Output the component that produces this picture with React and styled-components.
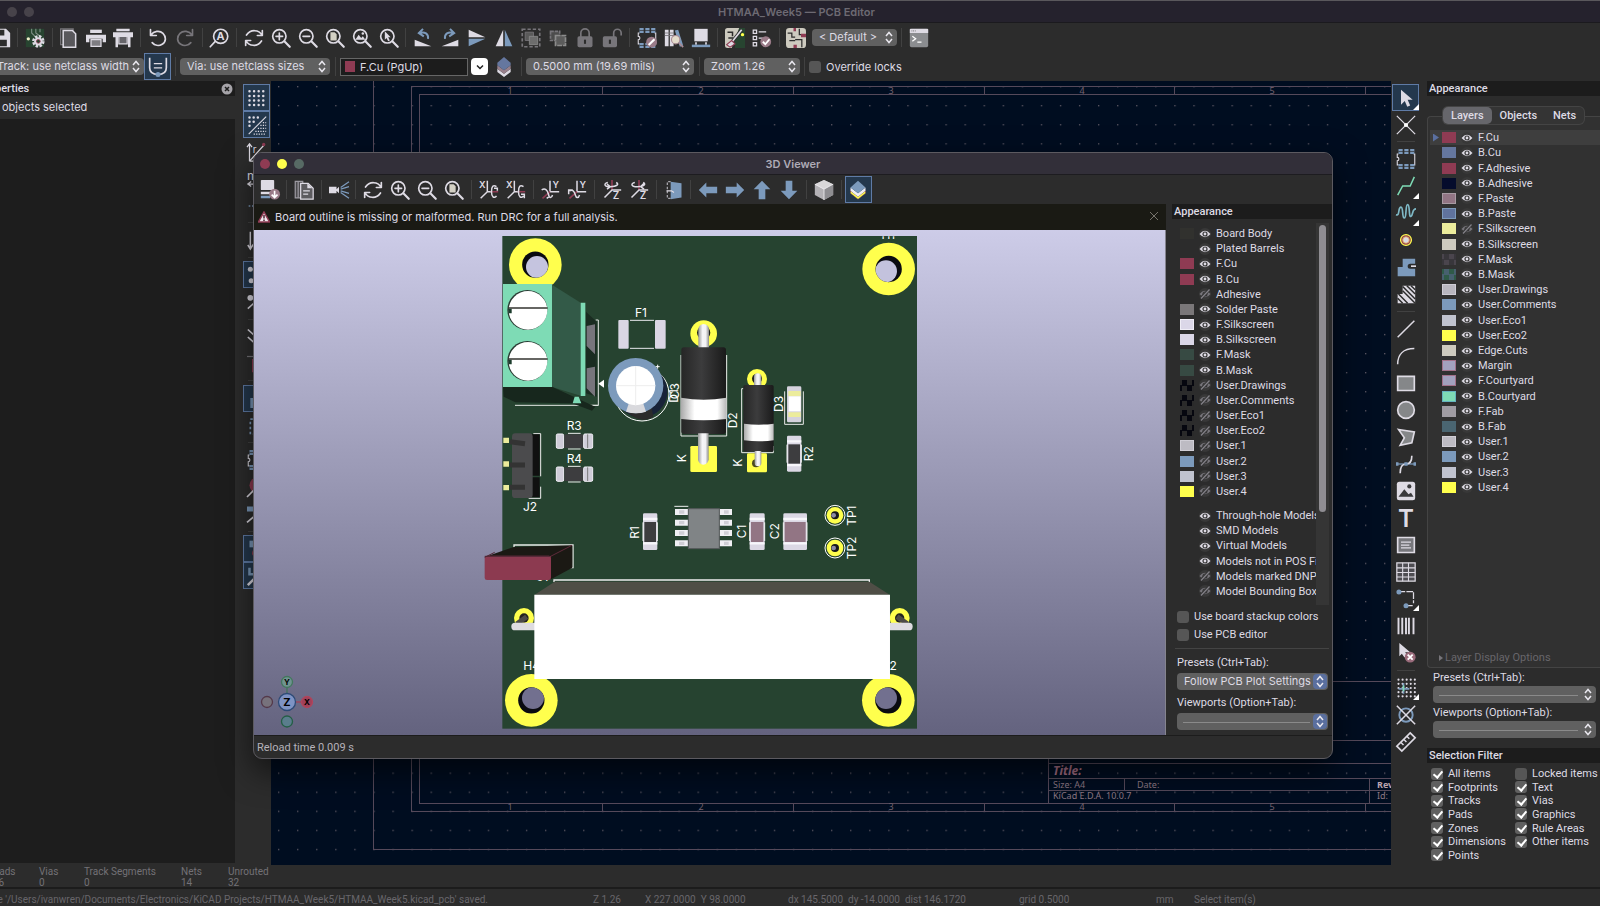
import React, { useState } from 'react'
import styled, { createGlobalStyle, css } from 'styled-components'

const LIGHT = '#dedbe4'
const BLUE = '#7c9abc'
const RED = '#8f3b53'
const GREY = '#77757a'
const MINT = '#7edbb5'

const line = { fill: 'none', stroke: LIGHT, strokeWidth: 2, strokeLinecap: 'round', strokeLinejoin: 'round' }

const lens = (
  <g {...line}>
    <circle cx="10" cy="10" r="8" />
    <path d="M16 16l6.5 6.5" strokeWidth="2.6" />
  </g>
)

const footprint = (
  <>
    <path d="M3 6H1.500v4a2 2 0 0 1 0 4v5H3M21 6h1.500v13H21" fill="none" stroke={LIGHT} strokeWidth="1.300" />
    <path d="M3 0h5v6H3zM10 0h5v6h-5zM17 0h5v6h-5zM3 18h5v6H3zM10 18h5v6h-5zM17 18h5v6h-5z" fill={BLUE} />
    <path d="M3 3h19M3 21h19" stroke="#2c2c2c" strokeWidth=".8" />
  </>
)

// 24 x 24 drawings, one for each tool
const ICONS = {
  save: <path d="M1 1h17l5 5v17H1zM6 2v7h10V2zM5 14v8h14v-8z" fill={LIGHT} fillRule="evenodd" />,
  boardSetup: (
    <>
      <path d="M1 1h22v22H1z" fill="#274430" />
      <path d="M8 1v5l4 4M13 1v5l4 3M18 1v4" fill="none" stroke="#7f8f86" strokeWidth="1.300" />
      <circle cx="4" cy="13" r="2" fill="#eeeec8" />
      <circle cx="16" cy="16" r="6" fill="none" stroke={LIGHT} strokeWidth="3" strokeDasharray="3 1.700" />
      <circle cx="16" cy="16" r="5" fill={LIGHT} />
      <circle cx="16" cy="16" r="2.200" fill="#274430" stroke={RED} />
    </>
  ),
  page: (
    <>
      <path d="M2 1h15v19H2z" fill="none" stroke={GREY} strokeWidth="1.500" />
      <path d="M5 3h11l4 4v16H5z" fill="#59585c" stroke={LIGHT} strokeWidth="1.800" />
    </>
  ),
  print: (
    <>
      <path d="M5 2h14v4H5z" fill={LIGHT} />
      <path d="M0 8h24v9h-4v-4H4v4H0z" fill={LIGHT} />
      <path d="M6 14h12v8H6z" fill="#7e7d82" stroke={LIGHT} strokeWidth="1.500" />
    </>
  ),
  plot: (
    <>
      <path d="M4 1h16v3H4zM0 5h24v6h-3v12h-3V11H6v12H3V11H0z" fill={LIGHT} />
      <path d="M7 10h10v9H7z" fill="#66656a" stroke={LIGHT} strokeWidth="1.500" />
    </>
  ),
  undo: <path d="M3 2v7h7M3.500 8.500C7 3.500 14 2.500 18 6.500s4 10-1 13c-4 2.500-9 1.500-12-2" {...line} />,
  redo: <path d="M21 2v7h-7M20.500 8.500C17 3.500 10 2.500 6 6.500s-4 10 1 13c4 2.500 9 1.500 12-2" {...line} stroke={GREY} />,
  find: (
    <>
      <g {...line}>
        <circle cx="14" cy="10" r="8.500" />
        <path d="M7.500 16L1.500 22.500" />
      </g>
      <text x="14" y="14.500" textAnchor="middle" fontSize="13" fontWeight="700" fill={LIGHT}>A</text>
    </>
  ),
  refresh: (
    <path d="M22 3v6h-6M21.500 8.500C18 2 8 1 3 8.500M2 21v-6h6M2.500 15.500C6 22 16 23 21 15.500" {...line} />
  ),
  zoomIn: <>{lens}<path d="M6 10h8M10 6v8" {...line} /></>,
  zoomOut: <>{lens}<path d="M6 10h8" {...line} /></>,
  zoomFit: <>{lens}<path d="M6.500 5h5l2.500 2.500V15H6.500z" fill="#d3d0c4" /></>,
  zoomObjects: <>{lens}<path d="M4 14l4-6 3 4 2-2 3 4z" fill={LIGHT} /><circle cx="13" cy="6.500" r="1.500" fill={LIGHT} /></>,
  zoomSelection: <>{lens}<path d="M7 4l7 7h-3l2 4-2 1-2-4-2 2z" fill={LIGHT} /></>,
  rotateCcw: (
    <>
      <path d="M2 14l20 8H2z" fill={LIGHT} />
      <path d="M18 13c1-6-4-9-10-7M12 1L7 6l6 4" fill="none" stroke={BLUE} strokeWidth="2.400" />
    </>
  ),
  rotateCw: (
    <>
      <path d="M22 14L2 22h20z" fill={LIGHT} />
      <path d="M6 13c-1-6 4-9 10-7M12 1l5 5-6 4" fill="none" stroke={BLUE} strokeWidth="2.400" />
    </>
  ),
  flip: <><path d="M2 2l20 9H2z" fill={LIGHT} /><path d="M2 22l20-9H2z" fill={BLUE} /></>,
  mirror: <><path d="M11 2v20H2z" fill={LIGHT} /><path d="M13 2v20h9z" fill={BLUE} /></>,
  group: (
    <>
      <path d="M1.500 1.500h21v21h-21z" fill="none" stroke={GREY} strokeWidth="2" strokeDasharray="4 2.300" />
      <path d="M5 5h10v10H5z" fill="#5a5a5a" stroke={GREY} />
      <path d="M10 10h10v10H10z" fill="#6d6d6d" stroke="#8c8c8c" />
    </>
  ),
  ungroup: (
    <>
      <path d="M3 4h11v11H3z" fill="#4c4c4c" stroke={GREY} strokeWidth="2" strokeDasharray="4 1" />
      <path d="M9 9h12v12H9z" fill="#5c5c5c" stroke="#8c8c8c" strokeWidth="2" strokeDasharray="6 1" />
    </>
  ),
  lock: (
    <>
      <path d="M7 11V6a5 5 0 0 1 10 0v5" fill="none" stroke={GREY} strokeWidth="2" />
      <rect x="3" y="10" width="18" height="13" rx="2" fill={GREY} />
      <path d="M12 14v5" stroke="#2c2c2c" strokeWidth="2.500" />
    </>
  ),
  unlock: (
    <>
      <path d="M14 11V6a4.500 4.500 0 0 1 9 0v3" fill="none" stroke={GREY} strokeWidth="2" />
      <rect x="1" y="10" width="17" height="13" rx="2" fill={GREY} />
      <path d="M9.500 14v5" stroke="#2c2c2c" strokeWidth="2.500" />
    </>
  ),
  footprintEditor: (
    <>
      {footprint}
      <circle cx="17.500" cy="17" r="6.500" fill="#9a7b88" />
      <path d="M14 20.500l7-7" stroke="#fff" strokeWidth="2.600" />
    </>
  ),
  library: (
    <>
      <path d="M1 2h4.500v20H1zM7 2h4.500v20H7z" fill={LIGHT} />
      <path d="M1 6h11M1 9h11" stroke="#77757a" />
      <path d="M13 3l4-1 6 19-4 1.500z" fill={BLUE} />
      <circle cx="14" cy="14" r="5" fill="#e4dccb" stroke="#a98a93" strokeWidth="1.300" />
      <path d="M18 18l5 5" stroke="#a98a93" strokeWidth="2" />
    </>
  ),
  viewer3d: (
    <>
      <path d="M4 1h16v15H4z" fill={LIGHT} />
      <path d="M5 17h2v3H5zM17 17h2v3h-2z" fill={LIGHT} />
      <path d="M1 20h22v3H1z" fill={BLUE} />
    </>
  ),
  updatePcb: (
    <>
      <path d="M12 0h12v24H12z" fill="#274430" />
      <path d="M3 0h14L8 24H3a3 3 0 0 1-3-3V3a3 3 0 0 1 3-3z" fill="#cdcabf" />
      <path d="M3 5h6v5M4 12h6" fill="none" stroke="#2c2c2c" strokeWidth="1.800" />
      <circle cx="21" cy="8" r="2" fill="#ffff4d" />
      <path d="M20 2L9 16" stroke="#2c2c2c" strokeWidth="4" />
      <path d="M20 2L9 16" stroke={LIGHT} strokeWidth="2" />
      <path d="M2 20l6-5 4 4-6 4z" fill={LIGHT} stroke={RED} strokeWidth="1.300" />
    </>
  ),
  drc: (
    <>
      <path d="M1.500 2.500h4v4h-4zM1.500 10h4v4h-4zM1.500 17.500h4v4h-4z" fill="none" stroke={LIGHT} strokeWidth="1.500" />
      <path d="M8 4.500h9M8 12h5" stroke={LIGHT} strokeWidth="1.500" />
      <circle cx="16.500" cy="16.500" r="6.500" fill="#9a7b88" />
      <path d="M13 16.500l3 3 5-6" fill="none" stroke="#fff" strokeWidth="2.200" />
    </>
  ),
  board: (
    <>
      <rect x="0" y="0" width="24" height="24" rx="4" fill="#cdcabf" />
      <path d="M2 6h5v5h4M16 1v7h7M11 14h8v9M11 15H4" fill="none" stroke="#2c2c2c" strokeWidth="1.500" />
      <path d="M18 7h6v4h-6zM9 0h3v4H9zM9 20h4v4H9z" fill={RED} />
    </>
  ),
  console: (
    <>
      <rect x="1" y="1" width="22" height="22" rx="2" fill="#8b8d90" />
      <path d="M1 1h22v5H1z" fill={LIGHT} />
      <path d="M3 3.500h5" stroke="#555" strokeDasharray="1 1" />
      <path d="M4 10l4 3-4 3M10 17h5" fill="none" stroke="#fff" strokeWidth="1.500" />
    </>
  ),
  trackWidth: (
    <>
      <path d="M2 1v12c0 6 4 8 10 8s10-2 10-8V1" fill="none" stroke={LIGHT} strokeWidth="2" />
      <path d="M7 8h10M7 13h10" stroke={LIGHT} strokeWidth="1.500" />
      <circle cx="12" cy="21" r="3" fill={BLUE} />
    </>
  ),
  layers: (
    <>
      <path d="M4 14v4l8 6 8-6v-4l-8 6z" fill={LIGHT} />
      <path d="M4 10v4l8 6 8-6v-4l-8 6z" fill="#98808c" />
      <path d="M12 0l8 7v3l-8 6-8-6V7z" fill="#65779f" />
    </>
  ),
  stack: (
    <>
      <path d="M3 13v3l9 7 9-7v-3l-9 7z" fill="#ffff4d" stroke={RED} strokeWidth=".8" strokeDasharray="2 1" />
      <path d="M3 9v4l9 7 9-7V9l-9 7z" fill="#f1eef6" />
      <path d="M12 1l9 8-9 7-9-7z" fill={BLUE} />
    </>
  ),
  exportImage: (
    <>
      <rect x="1" y="0" width="16" height="12" rx="1" fill={LIGHT} />
      <path d="M1 14h12v3H1z" fill={LIGHT} />
      <path d="M1 19h11v3H1z" fill={BLUE} />
      <circle cx="17.500" cy="17" r="6.500" fill="#9a7b88" />
      <path d="M17.500 13v8M14 17.500l3.500 3.500 3.500-3.500" fill="none" stroke="#fff" strokeWidth="2" />
    </>
  ),
  copy: (
    <>
      <path d="M1.500 1.500h9v20h-9zM5 1v20" fill="#4b4a4d" stroke="#9b99a0" strokeWidth="1.500" />
      <path d="M8 4h9l6 6v13H8z" fill="#5d5c60" stroke={LIGHT} strokeWidth="1.500" />
      <path d="M16 4v6h6z" fill={LIGHT} />
      <path d="M11 13h8M11 17h6" stroke={LIGHT} strokeWidth="1.500" />
    </>
  ),
  raytrace: (
    <>
      <path d="M0 8h9v8H0zM9 11l3-3v8l-3-3z" fill={LIGHT} />
      <path d="M14 9l10-7M14 11l10-3M14 13l10 3M14 15l10 7" stroke={BLUE} strokeWidth="1.500" />
    </>
  ),
  rotX: (
    <>
      <text x="0" y="9" fontSize="11" fontWeight="600" fill={LIGHT}>X</text>
      <path d="M10 1v13L2 22M10 14h5" fill="none" stroke={LIGHT} strokeWidth="1.800" />
      <path d="M14 14h9" stroke={RED} strokeWidth="1.800" />
      <path d="M21 8c-4-3-6 0-6 6s3 9 6 5M18 10h4v3" fill="none" stroke={LIGHT} strokeWidth="1.800" />
    </>
  ),
  rotXBack: (
    <>
      <text x="0" y="9" fontSize="11" fontWeight="600" fill={LIGHT}>X</text>
      <path d="M10 1v13L2 22M10 14h5" fill="none" stroke={LIGHT} strokeWidth="1.800" />
      <path d="M14 14h9" stroke={RED} strokeWidth="1.800" />
      <path d="M21 8c-4-3-6 0-6 6s3 9 6 5M18 17h4v5" fill="none" stroke={LIGHT} strokeWidth="1.800" />
    </>
  ),
  rotY: (
    <>
      <text x="15" y="9" fontSize="11" fontWeight="600" fill={LIGHT}>Y</text>
      <path d="M12 1v13h11" fill="none" stroke={LIGHT} strokeWidth="1.800" />
      <path d="M12 14L3 22" stroke={RED} strokeWidth="1.800" />
      <path d="M2 12c4-3 7 0 8 5s4 5 5 1M8 22l3-2-1-4" fill="none" stroke={LIGHT} strokeWidth="1.800" />
    </>
  ),
  rotYBack: (
    <>
      <text x="15" y="9" fontSize="11" fontWeight="600" fill={LIGHT}>Y</text>
      <path d="M12 1v13h11" fill="none" stroke={LIGHT} strokeWidth="1.800" />
      <path d="M12 14L3 22" stroke={RED} strokeWidth="1.800" />
      <path d="M2 17v-5h5M3 13c4-2 6 1 7 5s4 4 5 0" fill="none" stroke={LIGHT} strokeWidth="1.800" />
    </>
  ),
  rotZ: (
    <>
      <text x="13" y="23" fontSize="12" fontWeight="600" fill={LIGHT}>Z</text>
      <path d="M12 0v12" stroke={RED} strokeWidth="2" />
      <path d="M23 12H12l-9 9" fill="none" stroke={LIGHT} strokeWidth="1.800" />
      <path d="M7 3c-5 1-5 5 3 5s11-3 7-5M6 5l4 3-4 3" fill="none" stroke={LIGHT} strokeWidth="1.800" />
    </>
  ),
  rotZBack: (
    <>
      <text x="13" y="23" fontSize="12" fontWeight="600" fill={LIGHT}>Z</text>
      <path d="M12 0v12" stroke={RED} strokeWidth="2" />
      <path d="M23 12H12l-9 9" fill="none" stroke={LIGHT} strokeWidth="1.800" />
      <path d="M7 3c-5 1-5 5 3 5s11-3 7-5M18 4l-4 4 4 3" fill="none" stroke={LIGHT} strokeWidth="1.800" />
    </>
  ),
  flipBoard: (
    <>
      <path d="M8 2H4v20h4" fill="none" stroke="#a9a7ad" strokeWidth="1.500" strokeDasharray="3 2" />
      <path d="M8 2l13 2v17l-13 2z" fill={BLUE} />
      <path d="M3 13h6l3 2" fill="none" stroke={LIGHT} strokeWidth="1.500" />
    </>
  ),
  left: <path d="M1 12L10 3v5h13v8H10v5z" fill={BLUE} />,
  right: <path d="M23 12L14 3v5H1v8h13v5z" fill={BLUE} />,
  up: <path d="M12 1l10 10h-6v12H8V11H2z" fill={BLUE} />,
  down: <path d="M12 23l10-10h-6V1H8v12H2z" fill={BLUE} />,
  cube: (
    <>
      <path d="M12 0l11 5v13l-11 6-11-6V5z" fill="#b4b2b6" />
      <path d="M12 0l11 5-11 6L1 5z" fill="#d9d7d9" />
      <path d="M12 11l11-6v13l-11 6z" fill="#8f8e92" />
      <path d="M1 5l11 6 11-6M12 11v13" fill="none" stroke="#f0eef2" />
    </>
  ),
  gridDots: (
    <path d="M3 4h19M3 9.500h19M3 15h19M3 20.500h19" stroke={LIGHT} strokeWidth="3" strokeLinecap="round" strokeDasharray="0 5.500" fill="none" />
  ),
  gridOverride: (
    <>
      <path d="M3 3h11M3 8h7M3 13h3" stroke={LIGHT} strokeWidth="3" strokeLinecap="round" strokeDasharray="0 5" />
      <path d="M2 23L23 2" stroke={LIGHT} strokeWidth="1.300" />
      <path d="M19 9h4M16 12.500h7M13 16h10M10 19.500h13M8 23h15" stroke={LIGHT} strokeWidth="1.500" strokeDasharray="1.500 1.500" />
    </>
  ),
  polar: (
    <>
      <path d="M3 23V3M0 6l3-4 3 4M3 23h9M3 23L21 3" fill="none" stroke={LIGHT} strokeWidth="1.500" />
      <circle cx="20" cy="3" r="2" fill={RED} />
      <text x="7" y="13" fontSize="12" fill={LIGHT}>r</text>
    </>
  ),
  units: (
    <>
      <text x="0" y="13" fontSize="15" fill={LIGHT}>mm</text>
      <path d="M2 18h20M5 15l-4 3 4 3" fill="none" stroke={LIGHT} strokeWidth="1.500" />
    </>
  ),
  cursor45: <path d="M4 2v20M1 18l3 5 3-5M7 18l14-14" fill="none" stroke={LIGHT} strokeWidth="1.800" />,
  cursorFull: <path d="M12 2v20M2 12h20" fill="none" stroke={BLUE} strokeWidth="1.800" strokeDasharray="2 2" />,
  ratsnest: (
    <g fill={LIGHT}>
      <circle cx="4" cy="5" r="3" /><circle cx="5" cy="19" r="3" /><circle cx="19" cy="5" r="3" />
    </g>
  ),
  curved: <><circle cx="4" cy="7" r="3.500" fill={LIGHT} /><path d="M1 20L20 3" stroke={LIGHT} strokeWidth="1.800" /></>,
  contrast: (
    <>
      <path d="M1 3l20 18M1 12l12 11" stroke={LIGHT} strokeWidth="2" />
      <path d="M9 1l12 12" stroke={RED} strokeWidth="2" strokeDasharray="2 2" />
    </>
  ),
  netHighlight: <><path d="M0 3h22" stroke={GREY} strokeWidth="1.500" /><path d="M7 6v16" stroke={RED} strokeWidth="2" /></>,
  zoneFill: <path d="M4 12h18v12H4z" fill={BLUE} />,
  zoneOutline: <path d="M4 5h18v18H4z" fill="none" stroke={BLUE} strokeWidth="2" strokeDasharray="3 3" />,
  padFill: <><circle cx="13" cy="10" r="10" fill={RED} /><path d="M0 24L12 12" stroke={LIGHT} strokeWidth="2" /></>,
  trackFill: <><path d="M0 3h20v6H0z" fill={BLUE} /><path d="M0 22L12 12" stroke={LIGHT} strokeWidth="2" /></>,
  panels: <><path d="M3 2h14v8H3z" fill={BLUE} /><circle cx="11" cy="17" r="5" fill={RED} /></>,
  props: <><path d="M3 2v8h16" fill="none" stroke={BLUE} strokeWidth="3" /><path d="M1 23l10-10" stroke={LIGHT} strokeWidth="3" /></>,
  footprint,
  arrow: <path d="M6 2l14 12h-6l3 7-3.500 1.500-3-7L6 20z" fill={LIGHT} />,
  localRats: <><path d="M1 1l22 22M23 1L1 23" stroke={LIGHT} strokeWidth="1.500" /><circle cx="12" cy="12" r="2.500" fill="#fff" /></>,
  route: <path d="M2 23L8 12h9l5-11" fill="none" stroke={MINT} strokeWidth="1.800" />,
  tune: (
    <path d="M0 14c5 2 2-9 6-9 3 0 1 13 4 13s1-16 4-16 1 16 4 14 1-9 6-9" fill="none" stroke="#7fb9c6" strokeWidth="2" />
  ),
  via: (
    <>
      <circle cx="12" cy="12" r="6.500" fill={RED} stroke="#ffff4d" strokeWidth="1.500" />
      <circle cx="12" cy="12" r="4" fill="#dedbe4" stroke="#e0a04d" />
    </>
  ),
  zone: (
    <>
      <path d="M8 2h15v6h-6a3 3 0 0 0 0 6h6v9H2V12h6z" fill={BLUE} />
      <path d="M24 11h-6" stroke={LIGHT} strokeWidth="2" />
    </>
  ),
  ruleArea: (
    <>
      <path d="M8 2h15v21H2V12h6z" fill={LIGHT} />
      <path d="M8 3l15 15M8 8l15 15M3 12l11 11M13 2l10 10M18 2l5 5M2 17l6 6" stroke="#2c2c2c" strokeWidth="1.800" />
    </>
  ),
  line: <path d="M2 22L22 2" stroke={LIGHT} strokeWidth="1.800" />,
  arc: <path d="M2 22C2 10 9 3 22 3" fill="none" stroke={LIGHT} strokeWidth="1.800" />,
  rect: <path d="M2 4h20v17H2z" fill="#858789" stroke={LIGHT} strokeWidth="2" />,
  circle: <circle cx="12" cy="12" r="10" fill="#858789" stroke={LIGHT} strokeWidth="2" />,
  polygon: <path d="M3 3l19 3-3 13-14 3 5-9z" fill="#858789" stroke={LIGHT} strokeWidth="2" />,
  bezier: (
    <>
      <path d="M1 12h22" stroke={BLUE} strokeWidth="1.500" />
      <path d="M5 23c0-8 2-11 7-11s7-3 7-10" fill="none" stroke={LIGHT} strokeWidth="2" />
      <path d="M0 10h3v4H0zM21 10h3v4h-3zM10 10h4v4h-4z" fill={BLUE} />
    </>
  ),
  image: (
    <>
      <rect x="1" y="1" width="22" height="22" rx="3" fill={LIGHT} />
      <path d="M3 19l7-9 5 6 3-2 3 5z" fill="#3a3a3c" />
      <circle cx="16" cy="6.500" r="2.500" fill="#3a3a3c" />
    </>
  ),
  text: <text x="12" y="23" textAnchor="middle" fontSize="29" fontWeight="600" fill={LIGHT}>T</text>,
  textBox: (
    <>
      <path d="M2 3h20v18H2z" fill="#77777c" stroke={LIGHT} strokeWidth="2" />
      <path d="M6 8.500h12M6 12h10M6 15.500h12" stroke={LIGHT} strokeWidth="1.500" />
    </>
  ),
  table: (
    <>
      <path d="M1 1h22v22H1z" fill="#4e4d52" stroke={LIGHT} strokeWidth="1.500" />
      <path d="M1 7h22M1 12.500h22M1 18h22M8 1v22M15 1v22" stroke={LIGHT} strokeWidth="1.300" />
    </>
  ),
  dimension: (
    <>
      <path d="M3 3h18v14M12 20h9" fill="none" stroke={LIGHT} strokeWidth="1.500" strokeDasharray="8 1.500" />
      <circle cx="3.500" cy="3.500" r="3" fill={BLUE} />
      <circle cx="12" cy="20" r="3" fill={BLUE} />
    </>
  ),
  barcode: <path d="M3 2v20M7.500 2v20M12 2v20M15.500 2v20M21 2v20" stroke={LIGHT} strokeWidth="2.300" />,
  remove: (
    <>
      <path d="M4 0l13 11h-6l3 5-4 1-3-4-3 3z" fill={LIGHT} />
      <circle cx="17" cy="17" r="6.500" fill="#9a6b7b" />
      <path d="M14 14l6 6M20 14l-6 6" stroke="#fff" strokeWidth="2.200" />
    </>
  ),
  gridOrigin: (
    <>
      <path d="M3 2h20M3 7h20M3 17h20M3 22h20M3 12h20" stroke={LIGHT} strokeWidth="2.600" strokeLinecap="round" strokeDasharray="0 4.900" />
      <path d="M9 6v13M3 13h13" stroke={BLUE} strokeWidth="2" />
      <path d="M9 9v7" stroke={MINT} strokeWidth="2" />
    </>
  ),
  drillOrigin: (
    <>
      <circle cx="12" cy="12" r="8" fill="none" stroke={BLUE} strokeWidth="2.300" />
      <path d="M1 1l22 22M23 1L1 23" stroke={LIGHT} strokeWidth="1.800" />
    </>
  ),
  ruler: (
    <>
      <path d="M17 1l6 6L7 23l-6-6z" fill="none" stroke={LIGHT} strokeWidth="2" />
      <path d="M13 5l3 3M9.500 9l3 3M6 12.500l3 3" stroke={LIGHT} strokeWidth="1.800" />
    </>
  ),
}

const mainTools = [
  'save', '|', 'boardSetup', '|', 'page', 'print', 'plot', '|', 'undo', 'redo', '|', 'find', '|', 'refresh', 'zoomIn',
  'zoomOut', 'zoomFit', 'zoomObjects', 'zoomSelection', '|', 'rotateCcw', 'rotateCw', 'flip', 'mirror', 'group',
  'ungroup', 'lock', 'unlock', '|', 'footprintEditor', 'library', 'viewer3d', '|', 'updatePcb', 'drc', '|', 'board',
]
const leftTools = [
  'gridDots*', 'gridOverride*', 'polar', 'units', 'cursorFull', '|', 'cursor45', '|', 'ratsnest*', 'curved', '|',
  'contrast', 'netHighlight', '|', 'zoneFill*', 'zoneOutline', '|', 'footprint', 'padFill', 'trackFill', '|',
  'panels*', 'props*',
]
const rightTools = [
  'arrow*+', 'localRats', '|', 'footprint', 'route+', 'tune+', 'via', 'zone', 'ruleArea', '|', 'line', 'arc', 'rect',
  'circle', 'polygon', 'bezier', 'image', 'text', 'textBox', 'table', 'dimension+', 'barcode', 'remove', '|',
  'gridOrigin+', 'drillOrigin', 'ruler',
]
const viewerTools = [
  'exportImage', '|', 'copy', '|', 'raytrace', '|', 'refresh', 'zoomIn', 'zoomOut', 'zoomFit', '|', 'rotX', 'rotXBack',
  '|', 'rotY', 'rotYBack', '|', 'rotZ', 'rotZBack', '|', 'flipBoard', '|', 'left', 'right', 'up', 'down', '|', 'cube',
  '|', 'stack*',
]

// [name, colour, hidden, inner edge]
const editorLayers = [
  ['F.Cu', '#8f3b53'], ['B.Cu', '#65779f'], ['F.Adhesive', '#8f3b53'], ['B.Adhesive', '#050c2c'],
  ['F.Paste', '#927584', false, '#a89ba3'], ['B.Paste', '#60739e', false, '#7c9abc'], ['F.Silkscreen', '#ecec9c', true],
  ['B.Silkscreen', '#cdcabf'], ['F.Mask', 'check-grey'], ['B.Mask', 'check-green'],
  ['User.Drawings', '#b9b7c0', false, '#cfcdd6'], ['User.Comments', '#7c9abc'], ['User.Eco1', '#c0c3cf'],
  ['User.Eco2', '#ffff4d'], ['Edge.Cuts', '#cdcabf'], ['Margin', '#a3a1be', false, '#a3718a'],
  ['F.Courtyard', '#a3a1be', false, '#a3718a'], ['B.Courtyard', '#7edbb5', false, '#65b3c0'], ['F.Fab', '#a09ca3'],
  ['B.Fab', '#4a6571'], ['User.1', '#bdbbc3', false, '#d0ced6'], ['User.2', '#7c9abc'], ['User.3', '#c0c3cf'],
  ['User.4', '#ffff4d'],
]
const viewerLayers = [
  ['Board Body', '#31312e'], ['Plated Barrels', ''], ['F.Cu', '#8f3b53'], ['B.Cu', '#8f3b53'], ['Adhesive', '', true],
  ['Solder Paste', '#7a7779'], ['F.Silkscreen', '#dbd7e8', false, '#efedf6'], ['B.Silkscreen', '#dbd7e8'],
  ['F.Mask', '#374a43'], ['B.Mask', '#374a43'], ['User.Drawings', 'check-black', true],
  ['User.Comments', 'check-black', true], ['User.Eco1', 'check-black', true], ['User.Eco2', 'check-black', true],
  ['User.1', '#bdbbc3', true, '#d0ced6'], ['User.2', '#7c9abc', true], ['User.3', '#c0c3cf', true],
  ['User.4', '#ffff4d', true],
]
const viewerModels = [
  ['Through-hole Models', ''], ['SMD Models', ''], ['Virtual Models', ''], ['Models not in POS File', ''],
  ['Models marked DNP', '', true], ['Model Bounding Boxes', '', true],
]
const filters = [
  ['All items', true], ['Locked items', false], ['Footprints', true], ['Text', true], ['Tracks', true], ['Vias', true],
  ['Pads', true], ['Graphics', true], ['Zones', true], ['Rule Areas', true], ['Dimensions', true],
  ['Other items', true], ['Points', true],
]
const boardInfo = [['Pads', '76', 46], ['Vias', '0', 45], ['Track Segments', '0', 97], ['Nets', '14', 47], ['Unrouted', '32', 60]]

const checks = {
  'check-grey': ['#4a454d', '#38363b'],
  'check-green': ['#2f5a48', '#47606f'],
  'check-black': ['#2a2a2a', '#06070f'],
}

function Tool({ item }) {
  const name = item.replace(/[*+]/g, '')
  return (
    <ToolButton type="button" aria-label={name} $active={item.includes('*')} $more={item.includes('+')}>
      <svg viewBox="0 0 24 24">{ICONS[name]}</svg>
    </ToolButton>
  )
}

function Tools({ items, length, vertical }) {
  return (
    <ToolStrip $length={length} $vertical={vertical}>
      {items.map((item, i) => (item === '|' ? <Divider key={i} $vertical={vertical} /> : <Tool key={i} item={item} />))}
    </ToolStrip>
  )
}

function Dropdown({ label, value, width, accent, offset }) {
  return (
    <SelectBox $width={width} $offset={offset}>
      <Select aria-label={label} id={label} $empty={!value}>
        <option>{value}</option>
      </Select>
      <Arrows viewBox="0 0 14 15" $accent={accent}>
        <path d="M4 6l3-3.500L10 6M4 9l3 3.500L10 9" />
      </Arrows>
    </SelectBox>
  )
}

function LayerList({ rows, selected, height }) {
  return (
    <Layers $height={height}>
      {rows.map(([name, color, hidden, edge]) => (
        <LayerRow key={name} $selected={selected === name}>
          <Pointer $on={selected === name} />
          <Swatch $color={color} $edge={edge} />
          <EyeButton type="button" aria-label={`Toggle ${name}`}>
            <svg viewBox="0 0 12 12">
              <path d="M.5 6Q6-.5 11.500 6 6 12.500.5 6z" fill={hidden ? '#77757b' : LIGHT} />
              <circle cx="6" cy="6" r="2" fill="none" stroke="#333" strokeWidth="1.200" />
              {hidden && <path d="M1.500 10.500l9-9" stroke="#333" strokeWidth="3" />}
              {hidden && <path d="M2 10.500l8.500-9" stroke="#85838a" strokeWidth="1.200" />}
            </svg>
          </EyeButton>
          <span>{name}</span>
        </LayerRow>
      ))}
    </Layers>
  )
}

function Sheet() {
  const ticks = [602, 793, 984, 1174, 1365]
  const numbers = [510, 701, 891, 1082, 1272]
  return (
    <SheetSvg viewBox="271 81 1120 784" preserveAspectRatio="xMinYMin slice">
      <defs>
        <pattern id="dots" x="278" y="86" width="19.070" height="19.070" patternUnits="userSpaceOnUse">
          <rect width="1.300" height="1.300" fill="#5d5763" />
        </pattern>
      </defs>
      <rect x="271" y="81" width="1120" height="784" fill="url(#dots)" />
      <g fill="none" stroke="#55495a" shapeRendering="crispEdges">
        <path d="M373.500 81v768.500H1391M1391 86.500H411.500v724.500H1391M1391 94.500H419.500v709H1391" />
        <path d="M1333 681.500h58M1333 740.500h58M1048.500 740v63M1048.500 763.500H1391M1048.500 778.500H1391M1048.500 790.500H1391M1124.500 779v11M1369.500 779v24" />
        {ticks.map((x) => <path key={x} d={`M${x}.5 87v8M${x}.5 803v8`} />)}
      </g>
      <g fill="#76636f" fontSize="9" textAnchor="middle">
        {numbers.map((x, i) => (
          <React.Fragment key={x}>
            <text x={x} y="94">{i + 1}</text>
            <text x={x} y="810">{i + 1}</text>
          </React.Fragment>
        ))}
      </g>
      <g fill="#8d7884" fontSize="9">
        <text x="1053" y="775" fontSize="12" fontWeight="700" fontStyle="italic" fill="#a56e84">Title:</text>
        <text x="1053" y="788">Size: A4</text>
        <text x="1137" y="788">Date:</text>
        <text x="1053" y="799">KiCad E.D.A. 10.0.7</text>
        <text x="1377" y="788" fontWeight="700" fill="#b9a4ae">Rev:</text>
        <text x="1377" y="799">Id:</text>
      </g>
    </SheetSvg>
  )
}

const Hole = ({ x, y, dx, dy, sky }) => (
  <g>
    <circle cx={x} cy={y} r="79" fill="#ffff4d" />
    <circle cx={x} cy={y} r="39.500" fill="#0a0b10" />
    <clipPath id={`hole${x}`}><circle cx={x} cy={y} r="39.500" /></clipPath>
    <circle cx={x + dx} cy={y + dy} r="33" fill={sky} clipPath={`url(#hole${x})`} />
  </g>
)

const Screw = ({ y }) => (
  <g>
    <circle cx="142" cy={y} r="60" fill="#2a3b33" />
    <circle cx="144" cy={y + 1} r="58" fill="#fff" />
    <path d={`M84 ${y - 6}H203`} stroke="#33332f" strokeWidth="5" />
    <path d={`M84 ${y - 4}h11v14h-9z`} fill="#1c3c2c" />
  </g>
)

const Resistor = ({ x, y }) => (
  <g>
    <path d={`M${x + 35} ${y - 1}h38M${x + 35} ${y + 46}h38`} stroke="#eee" strokeWidth="3" />
    <rect x={x} y={y + 1} width="22" height="43" rx="4" fill="#cfccd8" stroke="#f1eff6" strokeWidth="3" />
    <rect x={x + 82} y={y + 1} width="27" height="43" rx="4" fill="#cfccd8" stroke="#f1eff6" strokeWidth="3" />
    <path d={`M${x + 94} ${y + 2}v41`} stroke="#777" strokeWidth="3" />
    <rect x={x + 24} y={y + 2} width="56" height="41" fill="#3d3d3f" />
  </g>
)

const UprightChip = ({ x, y, h, w, fill }) => (
  <g>
    <rect x={x} y={y} width={w} height={h} rx="4" fill="#dbd8e4" />
    <path d={`M${x} ${y + 17}h${w}M${x} ${y + h - 20}h${w}`} stroke="#f8f7fb" strokeWidth="7" />
    <path d={`M${x} ${y + 27}v${h - 54}M${x + w} ${y + 27}v${h - 54}`} stroke="#f3f3f3" strokeWidth="3" />
    <rect x={x + 4} y={y + 26} width={w - 8} height={h - 50} fill={fill} />
  </g>
)

// all shapes below are drawn in thirds of a pixel
function Board() {
  return (
    <BoardSvg viewBox="254 230 911 505" preserveAspectRatio="xMidYMid meet">
      <defs>
        <linearGradient id="barrel">
          <stop offset="0" stopColor="#262626" /><stop offset=".45" stopColor="#3c3c3d" /><stop offset="1" stopColor="#1a1a1a" />
        </linearGradient>
        <linearGradient id="band">
          <stop offset="0" stopColor="#aaa" /><stop offset=".3" stopColor="#fff" /><stop offset=".8" stopColor="#fff" /><stop offset="1" stopColor="#b8b8b8" />
        </linearGradient>
        <linearGradient id="lead">
          <stop offset="0" stopColor="#999" /><stop offset=".4" stopColor="#f6f6f8" /><stop offset=".7" stopColor="#f2f2f4" /><stop offset="1" stopColor="#8c8c8c" />
        </linearGradient>
      </defs>
      <g transform="translate(480 220) scale(.33333)">
        <rect x="67" y="48" width="1244" height="1478" fill="#264330" />
        <Hole x={166} y={134} dx={5} dy={7} sky="#c5c4df" />
        <Hole x={1226} y={147} dx={-8} dy={7} sky="#c3c2dd" />
        <Hole x={154} y={1441} dx={5} dy={-7} sky="#72708f" />
        <Hole x={1225} y={1441} dx={-7} dy={-7} sky="#72708f" />
        <clipPath id="edge"><rect x="67" y="49" width="1244" height="30" /></clipPath>
        <text x="1225" y="57" fontSize="36" textAnchor="middle" fill="#fff" clipPath="url(#edge)">H1</text>

        <g>
          <path d="M105 556h250V300h-8M335 556h20" fill="none" stroke="#e5e8e5" strokeWidth="3" />
          <path d="M216 194l86 54v279l-86-26z" fill="#335a48" />
          <path d="M69 500h147l130 60-10 12-60-22-170-3-35-17z" fill="#17271d" />
          <path d="M318 275l32 30v225l-32-10z" fill="#1a2c21" />
          <path d="M320 318l25-5v90l-25-25zM320 445l25-5v90l-25-25z" fill="#77757c" />
          <path d="M302 248h14v280h-14zM284 530h12l8 20h-26z" fill={MINT} />
          <path d="M69 192h147v309H69z" fill={MINT} />
          <Screw y={270} />
          <Screw y={423} />
          <path d="M355 491l17-12v24z" fill="#fff" />
        </g>

        <g>
          <path d="M450 301h72M450 385h72" stroke="#e9e9ee" strokeWidth="3" />
          <rect x="415" y="300" width="31" height="86" rx="3" fill="#dad6e4" />
          <rect x="525" y="300" width="32" height="86" rx="3" fill="#dad6e4" />
        </g>

        <text transform="translate(594 548) rotate(-90)" fontSize="36" fill="#fff">D1</text>
        <text transform="translate(597 538) rotate(-90)" fontSize="36" fill="#fff">C3</text>

        <g>
          <circle cx="486" cy="522" r="81" fill="none" stroke="#fff" strokeWidth="3" />
          <circle cx="484" cy="515" r="78" fill="#182339" />
          <path d="M425 560q55 60 95 30l-10-50z" fill="#2b2b2b" />
          <circle cx="467" cy="497" r="83" fill={BLUE} />
          <path d="M448 545h40l10 30q-30 10-60 0z" fill="#d9d9dd" />
          <circle cx="467" cy="497" r="59" fill="#fff" />
          <path d="M408 497h118M467 438v118" stroke="#eee" strokeWidth="3" />
          <path d="M527 440h12M533 434v12" stroke="#fff" strokeWidth="3" />
        </g>

        <g>
          <circle cx="671" cy="341" r="40" fill="#ffff4d" />
          <circle cx="671" cy="338" r="20" fill="#22241f" />
          <rect x="655" y="312" width="32" height="90" rx="16" fill="url(#lead)" />
          <path d="M603 405v243h137V405" fill="none" stroke="#eef0ee" strokeWidth="3" />
          <rect x="604" y="382" width="134" height="260" rx="8" fill="url(#barrel)" />
          <path d="M603 533q68 12 136 0v64q-68 8-136 0z" fill="url(#band)" />
          <rect x="631" y="678" width="80" height="78" rx="4" fill="#ffff4d" />
          <path d="M654 640h32v78a16 16 0 0 1-32 0z" fill="url(#lead)" />
        </g>

        <g>
          <circle cx="831" cy="477" r="30" fill="#ffff4d" />
          <circle cx="831" cy="476" r="15" fill="#22241f" />
          <rect x="822" y="460" width="22" height="50" rx="11" fill="url(#lead)" />
          <path d="M790 506h-5v192h95v-20" fill="none" stroke="#eef0ee" strokeWidth="3" />
          <rect x="790" y="495" width="91" height="200" rx="5" fill="url(#barrel)" />
          <path d="M792 611q44 6 89 0v50q-44 6-89 0z" fill="url(#band)" />
          <rect x="801" y="700" width="60" height="57" rx="4" fill="#ffff4d" />
          <circle cx="828" cy="730" r="12" fill="#4b4a1f" />
          <path d="M824 693h20v36a10 10 0 0 1-20 0z" fill="url(#lead)" />
        </g>

        <g>
          <path d="M914 514v99h56v-99" fill="none" stroke="#e9eae9" strokeWidth="3" />
          <rect x="921" y="499" width="43" height="108" rx="4" fill="#d5d2dd" />
          <path d="M925 513h37v16h-37zM925 577h37v14h-37z" fill="#ecec9c" />
          <rect x="926" y="529" width="36" height="45" fill="#fff" />
        </g>
        <UprightChip x={921} y={647} w={43} h={108} fill="#3d3d3f" />
        <UprightChip x={489} y={880} w={43} h={110} fill="#3d3d3f" />
        <UprightChip x={809} y={880} w={45} h={110} fill="#927584" />
        <UprightChip x={910} y={880} w={71} h={110} fill="#927584" />

        <Resistor x={229} y={641} />
        <Resistor x={229} y={740} />

        <g>
          <path d="M160 641h22v128M182 800v35h-36" fill="none" stroke="#eee" strokeWidth="3" />
          <path d="M155 643h24v124h-24zM155 772h24v60h-24z" fill="#101010" />
          <rect x="96" y="640" width="62" height="194" rx="10" fill="#4b4b4d" />
          <path d="M90 665l45 6M90 735h45M90 802h45" stroke="#333" strokeWidth="15" />
          <path d="M70 653h17v16H70zM70 724h17v16H70zM70 795h17v16H70z" fill="#ecec9c" />
        </g>

        <g>
          <path d="M583 859h42" stroke="#eee" strokeWidth="3" />
          {[876, 908, 939, 970].map((y) => (
            <React.Fragment key={y}>
              <path d={`M585 ${y}h40M718 ${y}h38`} stroke="#f0eff4" strokeWidth="18" />
              <path d={`M597 ${y}h16M732 ${y}h14`} stroke="#d0cfd6" strokeWidth="10" />
            </React.Fragment>
          ))}
          <rect x="625" y="866" width="93" height="120" fill="#808486" stroke="#55585a" strokeWidth="3" />
        </g>

        {[886, 984].map((y) => (
          <g key={y}>
            <circle cx="1065" cy={y} r="30" fill="none" stroke="#fff" strokeWidth="3" />
            <circle cx="1065" cy={y} r="25" fill="#ffff4d" />
            <circle cx="1065" cy={y} r="12" fill="#17181c" />
            <circle cx="1061" cy={y} r="7" fill="#8c8ba6" />
          </g>
        ))}

        <g>
          <text x="170" y="1083" fontSize="36" fill="#fff">J1</text>
          <path d="M102 985v-10h177v68h-12" fill="none" stroke="#e8ebe8" strokeWidth="4" />
          <path d="M101 981l176-5v67l-64 35-190-70z" fill="#1b1914" />
          <path d="M210 1010l66-34" stroke="#5e2a3a" strokeWidth="3" />
          <rect x="14" y="1007" width="199" height="73" rx="7" fill="#8c3a50" />
          <path d="M14 1012l30-15M14 1009h196" stroke="#4f2734" strokeWidth="3" fill="none" />
        </g>

        <g>
          <circle cx="132" cy="1194" r="30" fill="#ffff4d" />
          <circle cx="1259" cy="1194" r="30" fill="#ffff4d" />
          <circle cx="132" cy="1194" r="14" fill="#22221e" />
          <circle cx="1259" cy="1194" r="14" fill="#22221e" />
          <path d="M140 1190l-30 22M1251 1190l32 22" stroke="#4d4b47" strokeWidth="15" />
          <rect x="94" y="1208" width="80" height="23" rx="11" fill="#dedce0" />
          <rect x="1220" y="1208" width="78" height="23" rx="11" fill="#dedce0" />
          <g fill="#fff" fontSize="36">
            <text x="130" y="1351">H4</text>
            <text x="1202" y="1351">H2</text>
          </g>
          <path d="M222 1086v-6h946v6" fill="none" stroke="#eee" strokeWidth="4" />
          <path d="M224 1085h944l61 39H164z" fill="#4f4e46" />
          <path d="M163 1124h1067v253H163z" fill="#fff" />
        </g>

        <g fill="#fff" fontSize="36">
          <text x="465" y="291">F1</text>
          <text x="260" y="630">R3</text>
          <text x="260" y="729">R4</text>
          <text x="129" y="872">J2</text>
          <text transform="translate(618 727) rotate(-90)">K</text>
          <text transform="translate(787 740) rotate(-90)">K</text>
          <text transform="translate(771 625) rotate(-90)">D2</text>
          <text transform="translate(909 576) rotate(-90)">D3</text>
          <text transform="translate(1000 724) rotate(-90)">R2</text>
          <text transform="translate(478 937) rotate(-90)" textAnchor="middle">R1</text>
          <text transform="translate(798 934) rotate(-90)" textAnchor="middle">C1</text>
          <text transform="translate(897 934) rotate(-90)" textAnchor="middle">C2</text>
          <text transform="translate(1127 887) rotate(-90)" textAnchor="middle">TP1</text>
          <text transform="translate(1127 984) rotate(-90)" textAnchor="middle">TP2</text>
        </g>
      </g>

      <g strokeWidth="1.300" fontWeight="700" textAnchor="middle">
        <path d="M287 682v12" stroke="#43775e" />
        <path d="M296 702h8" stroke="#a0415a" />
        <circle cx="267" cy="702" r="5.500" fill="#77727c" stroke="#54394a" />
        <circle cx="287" cy="682" r="5.500" fill="#6f9490" stroke="#43775e" />
        <circle cx="287" cy="721.500" r="5.500" fill="#5a7d8c" stroke="#245e46" />
        <circle cx="307" cy="702" r="5.500" fill="#a0415a" stroke="#b0455c" />
        <circle cx="287" cy="702" r="8.500" fill="#7e93c4" stroke="#2d4a76" />
        <text x="287" y="685" fontSize="8">Y</text>
        <text x="307" y="705" fontSize="8">X</text>
        <text x="287" y="706" fontSize="11">Z</text>
      </g>
    </BoardSvg>
  )
}

function Viewer() {
  return (
    <Window>
      <WindowTitle>
        <Lights>
          <Light $color="#8f3b53" /><Light $color="#ffff4d" /><Light $color="#576a64" />
        </Lights>
        <span>3D Viewer</span>
        <Lights />
      </WindowTitle>
      <ViewerToolbar><Tools items={viewerTools} length={616} /></ViewerToolbar>
      <ViewerBody>
        <Scene>
          <Notice>
            <svg viewBox="0 0 12 12" width="12" height="12">
              <path d="M6 1l5.500 10H.5z" fill="#f0e9ee" stroke={RED} strokeWidth="1.500" />
              <path d="M6 4v3.500M6 8.500V10" stroke="#4b2430" strokeWidth="1.500" />
            </svg>
            <span>Board outline is missing or malformed. Run DRC for a full analysis.</span>
            <CloseNotice type="button" aria-label="Dismiss">
              <svg viewBox="0 0 10 10" width="10" height="10"><path d="M1 1l8 8M9 1L1 9" stroke="#77746c" /></svg>
            </CloseNotice>
          </Notice>
          <Viewport><Board /></Viewport>
        </Scene>
        <ViewerSide>
          <PanelTitle>Appearance</PanelTitle>
          <ScrollArea>
            <ListClip>
              <LayerList rows={viewerLayers} height={273} />
              <LayerList rows={viewerModels} height={91} />
            </ListClip>
            <Track><Thumb /></Track>
          </ScrollArea>
          <ViewerOptions>
            <CheckLabel><Check type="checkbox" />Use board stackup colors</CheckLabel>
            <CheckLabel><Check type="checkbox" />Use PCB editor</CheckLabel>
          </ViewerOptions>
          <ViewerPresets>
            <Field><label htmlFor="Viewer presets">Presets (Ctrl+Tab):</label><Dropdown label="Viewer presets" value="Follow PCB Plot Settings" accent /></Field>
            <Field><label htmlFor="Viewer viewports">Viewports (Option+Tab):</label><Dropdown label="Viewer viewports" value="" accent /></Field>
          </ViewerPresets>
        </ViewerSide>
      </ViewerBody>
      <WindowStatus>Reload time 0.009 s</WindowStatus>
    </Window>
  )
}

export default function App() {
  const [tab, setTab] = useState('Layers')
  return (
    <Page>
      <GlobalStyle />
      <TitleBar>
        <Lights><Light $color="#47434a" /><Light $color="#47434a" /></Lights>
        <h1>HTMAA_Week5 — PCB Editor</h1>
        <Lights />
      </TitleBar>
      <Toolbar>
        <MainTools><Tools items={mainTools} length={823} /></MainTools>
        <Dropdown label="Variant" value="< Default >" width={85} />
        <Divider $size={8} />
        <Tool item="console" />
      </Toolbar>
      <Toolbar>
        <Dropdown label="Track width" value="Track: use netclass width" width={154} offset />
        <Tool item="trackWidth*" />
        <Divider $size={9} />
        <Dropdown label="Via size" value="Via: use netclass sizes" width={150} />
        <Divider $size={10} />
        <LayerCombo>
          <Swatch $color="#8f3b53" $small />
          <input aria-label="Active layer" defaultValue="F.Cu (PgUp)" />
        </LayerCombo>
        <ComboButton type="button" aria-label="Choose layer">
          <svg viewBox="0 0 10 10" width="10" height="10"><path d="M2 3.500L5 6.500l3-3" fill="none" stroke="#222" strokeWidth="1.500" /></svg>
        </ComboButton>
        <Tool item="layers" />
        <Divider $size={9} />
        <Dropdown label="Grid" value="0.5000 mm (19.69 mils)" width={168} />
        <Divider $size={10} />
        <Dropdown label="Zoom" value="Zoom 1.26" width={96} />
        <Divider $size={9} />
        <CheckLabel $large><Check type="checkbox" />Override locks</CheckLabel>
      </Toolbar>

      <Main>
        <Properties>
          <PanelTitle>
            <Clipped $shift={24}>Properties</Clipped>
            <CloseButton type="button" aria-label="Close properties">
              <svg viewBox="0 0 12 12" width="12" height="12">
                <circle cx="6" cy="6" r="5.500" fill="#a5a3a8" /><path d="M4 4l4 4M8 4l-4 4" stroke="#1c1c1c" strokeWidth="1.500" />
              </svg>
            </CloseButton>
          </PanelTitle>
          <Selection><Clipped $shift={18}>No objects selected</Clipped></Selection>
          <PropertyGrid />
        </Properties>
        <LeftBar><Tools items={leftTools} length={505} vertical /></LeftBar>
        <Canvas><Sheet /></Canvas>
        <RightBar><Tools items={rightTools} length={671} vertical /></RightBar>
        <Appearance>
          <PanelTitle>Appearance</PanelTitle>
          <Tabs role="tablist">
            {['Layers', 'Objects', 'Nets'].map((t) => (
              <Tab key={t} role="tab" type="button" aria-selected={tab === t} $on={tab === t} onClick={() => setTab(t)}>{t}</Tab>
            ))}
          </Tabs>
          <LayerPanel>
            <LayerList rows={editorLayers} selected="F.Cu" height={365} />
            <DisplayOptions type="button">
              <svg viewBox="0 0 6 8" width="6" height="8"><path d="M1 1l4 3-4 3z" fill="#77757a" /></svg>
              Layer Display Options
            </DisplayOptions>
          </LayerPanel>
          <EditorPresets>
            <Field $tight><label htmlFor="Presets">Presets (Ctrl+Tab):</label><Dropdown label="Presets" value="" /></Field>
            <Field $tight><label htmlFor="Viewports">Viewports (Option+Tab):</label><Dropdown label="Viewports" value="" /></Field>
          </EditorPresets>
          <PanelTitle>Selection Filter</PanelTitle>
          <FilterGrid>
            {filters.map(([name, on]) => (
              <CheckLabel key={name}><Check type="checkbox" defaultChecked={on} />{name}</CheckLabel>
            ))}
          </FilterGrid>
        </Appearance>
      </Main>

      <Info>
        {boardInfo.map(([name, value, width]) => (
          <InfoItem key={name} $width={width}><dt>{name}</dt><dd>{value}</dd></InfoItem>
        ))}
      </Info>
      <StatusBar>
        <StatusCell $grow><Clipped $shift={13}>File '/Users/ivanwren/Documents/Electronics/KiCAD Projects/HTMAA_Week5/HTMAA_Week5.kicad_pcb' saved.</Clipped></StatusCell>
        <StatusCell $width={52}>Z 1.26</StatusCell>
        <StatusCell $width={143}>X 227.0000&nbsp; Y 98.0000</StatusCell>
        <StatusCell $width={231}>dx 145.5000&nbsp; dy -14.0000&nbsp; dist 146.1720</StatusCell>
        <StatusCell $width={137}>grid 0.5000</StatusCell>
        <StatusCell $width={38}>mm</StatusCell>
        <StatusCell $width={406}>Select item(s)</StatusCell>
      </StatusBar>
      <Viewer />
    </Page>
  )
}

const GlobalStyle = createGlobalStyle`
    * {
        box-sizing: border-box;
    }
    body {
        margin: 0;
        background: #2c2c2c;
    }
    body, button, input, select {
        font-family: Roboto, "Liberation Sans", sans-serif;
        font-size: 11px;
        color: #dedbe4;
    }
    button {
        border: 0;
        padding: 0;
        background: none;
    }
    svg text {
        font-family: Inter, "Liberation Sans", sans-serif;
    }
`

const Page = styled.div`
    position: relative;
    display: flex;
    flex-direction: column;
    height: 100vh;
    min-height: 800px;
    overflow: hidden;
    background: #2c2c2c;
`

const bar = css`
    display: flex;
    align-items: center;
    flex: none;
`

// the wider face of toolbars, titles and notices
const wide = css`
    font-family: Inter, "Liberation Sans", sans-serif;
    font-size: 11px;
`

const TitleBar = styled.header`
    ${bar}
    justify-content: space-between;
    height: 23px;
    padding: 0 14px 0 7px;
    background: #25222d;
    border-top: 1px solid #5a585c;
    border-bottom: 1px solid #1b1a1e;
    h1 {
        ${wide}
        margin: 0;
        font-weight: 600;
        color: #6d6a73;
    }
`

const Lights = styled.div`
    display: flex;
    gap: 7px;
    width: 60px;
`

const Light = styled.i`
    width: 10px;
    height: 10px;
    border-radius: 50%;
    background: ${({ $color }) => $color};
`

const Toolbar = styled.div`
    ${bar}
    height: 29px;
`

const MainTools = styled.div`
    margin: 0 2px 0 -13px;
`

const ToolStrip = styled.div`
    display: flex;
    align-items: center;
    flex: none;
    ${({ $vertical, $length }) => ($vertical
    ? `flex-direction: column; height: ${$length}px;`
    : `width: ${$length}px;`)}
`

const ToolButton = styled.button`
    position: relative;
    display: grid;
    place-items: center;
    flex: none;
    width: 27px;
    height: 27px;
    ${({ $active }) => $active && css`
        background: #24384d;
        box-shadow: inset 0 0 0 1px #5f7ba6;
    `}
    svg {
        width: 20px;
        height: 20px;
        overflow: visible;
    }
    ${({ $more }) => $more && css`
        &::after {
            content: '';
            position: absolute;
            right: 0;
            bottom: 1px;
            border: 3px solid;
            border-color: transparent #fff #fff transparent;
        }
    `}
`

const Divider = styled.span`
    ${({ $size }) => ($size ? `flex: none; width: ${$size}px;` : 'flex: 1;')}
    display: grid;
    place-items: center;
    &::before {
        content: '';
        background: #414141;
        width: ${({ $vertical }) => ($vertical ? '18px' : '1px')};
        height: ${({ $vertical }) => ($vertical ? '1px' : '19px')};
    }
`

const SelectBox = styled.div`
    display: grid;
    align-items: center;
    flex: none;
    width: ${({ $width }) => ($width ? `${$width}px` : '100%')};
    margin-left: ${({ $offset }) => ($offset ? '-10px' : '0')};
    & > * {
        grid-area: 1 / 1;
    }
`

const Select = styled.select`
    ${wide}
    appearance: none;
    width: 100%;
    height: 17px;
    padding: 0 15px 0 7px;
    border: 0;
    border-radius: 4px;
    background: #606060;
    line-height: 17px;
    ${({ $empty }) => $empty && css`
        background: linear-gradient(#8a8a8a, #8a8a8a) 6px 9px / calc(100% - 24px) 1px no-repeat #606060;
    `}
`

const Arrows = styled.svg`
    justify-self: end;
    width: 14px;
    height: 15px;
    margin-right: 1px;
    border-radius: 4px;
    pointer-events: none;
    background: ${({ $accent }) => ($accent ? '#5a6f9f' : 'none')};
    path {
        fill: none;
        stroke: #e9e7ee;
        stroke-width: 1.5;
    }
`

const LayerCombo = styled.div`
    display: flex;
    align-items: center;
    gap: 5px;
    width: 128px;
    height: 18px;
    padding-left: 4px;
    margin-right: 3px;
    border: 1px solid #666;
    background: #1c1c1c;
    input {
        ${wide}
        flex: 1;
        min-width: 0;
        padding: 0;
        border: 0;
        background: none;
    }
`

const ComboButton = styled.button`
    display: grid;
    place-items: center;
    width: 17px;
    height: 17px;
    margin-right: 2px;
    border-radius: 4px;
    background: #fff;
`

const CheckLabel = styled.label`
    display: flex;
    align-items: center;
    gap: 5px;
    white-space: nowrap;
    ${({ $large }) => $large && wide}
`

const Check = styled.input`
    appearance: none;
    flex: none;
    width: 12px;
    height: 12px;
    margin: 0;
    border-radius: 3px;
    background: #565656;
    &:checked {
        background: #606060;
    }
    &:checked::before {
        content: '';
        display: block;
        width: 4px;
        height: 7px;
        margin: 1px 4px;
        border: solid #fff;
        border-width: 0 2px 2px 0;
        transform: rotate(40deg);
    }
`

const Main = styled.main`
    display: flex;
    flex: 1;
    min-height: 0;
`

const Properties = styled.aside`
    display: flex;
    flex-direction: column;
    width: 235px;
    flex: none;
`

const PanelTitle = styled.h2`
    display: flex;
    align-items: center;
    justify-content: space-between;
    flex: none;
    height: 15px;
    margin: 0;
    padding: 0 2px;
    background: #1c1c1c;
    font-size: 11px;
    font-weight: 500;
    line-height: 15px;
`

const Clipped = styled.span`
    margin-left: ${({ $shift }) => `-${$shift}px`};
    white-space: nowrap;
`

const CloseButton = styled.button`
    display: grid;
`

const Selection = styled.p`
    ${wide}
    margin: 0;
    padding: 0 2px;
    line-height: 23px;
`

const PropertyGrid = styled.div`
    flex: 1;
    margin-bottom: 2px;
    background: #1d1d1d;
`

const LeftBar = styled.nav`
    display: flex;
    justify-content: flex-end;
    flex: none;
    width: 36px;
    padding: 3px 1px 0 0;
`

const Canvas = styled.section`
    flex: 1;
    min-width: 0;
    background: #000d20;
    overflow: hidden;
`

const SheetSvg = styled.svg`
    display: block;
    width: 100%;
    height: 100%;
    text {
        font-family: "Noto Sans", sans-serif;
    }
`

const RightBar = styled.nav`
    display: flex;
    align-items: flex-start;
    flex: none;
    width: 36px;
    padding: 3px 0 0 1px;
`

const Appearance = styled.aside`
    display: flex;
    flex-direction: column;
    flex: none;
    width: 173px;
`

const Tabs = styled.div`
    position: relative;
    display: flex;
    align-self: flex-start;
    margin: 11px 0 0 16px;
    border-radius: 5px;
    background: #343434;
    box-shadow: 0 0 0 1px #444;
`

const Tab = styled.button`
    height: 17px;
    padding: 0 8px;
    border-radius: 5px;
    font-weight: 500;
    background: ${({ $on }) => ($on ? '#66666b' : 'none')};
`

const LayerPanel = styled.div`
    display: flex;
    flex-direction: column;
    flex: 1;
    margin-top: -8px;
    padding-top: 13px;
    border: 1px solid #444;
    border-right: 0;
    border-radius: 4px 0 0 4px;
    background: #313131;
`

const Layers = styled.ul`
    display: grid;
    grid-auto-rows: 1fr;
    flex: none;
    height: ${({ $height }) => $height}px;
    margin: 0;
    padding: 0;
    list-style: none;
`

const LayerRow = styled.li`
    display: flex;
    align-items: center;
    margin-left: 2px;
    white-space: nowrap;
    background: ${({ $selected }) => ($selected ? '#3e3e3e' : 'none')};
`

const Pointer = styled.i`
    width: 6px;
    height: 8px;
    margin: 0 3px;
    background: ${({ $on }) => ($on ? '#5a6f9f' : 'none')};
    clip-path: polygon(0 0, 100% 50%, 0 100%);
`

const Swatch = styled.i`
    flex: none;
    width: ${({ $small }) => ($small ? '10px' : '14px')};
    height: 11px;
    background: ${({ $color }) => {
    const pair = checks[$color]
    return pair
      ? `repeating-conic-gradient(${pair[0]} 0 25%, ${pair[1]} 0 50%) 2px 0 / 10px 11px`
      : $color || 'none'
  }};
    border: ${({ $edge }) => ($edge ? `1px solid ${$edge}` : '0')};
`

const EyeButton = styled.button`
    display: grid;
    margin: 0 5px;
    border-radius: 50%;
    background: #383838;
    svg {
        width: 12px;
        height: 12px;
    }
`

const DisplayOptions = styled.button`
    display: flex;
    align-items: center;
    gap: 1px;
    margin: auto 0 2px 10px;
    line-height: 14px;
    color: #68666b;
`

const EditorPresets = styled.div`
    display: grid;
    gap: 3px;
    padding: 3px 4px 10px 6px;
`

const Field = styled.div`
    display: grid;
    gap: ${({ $tight }) => ($tight ? '1px' : '3px')};
    line-height: 14px;
`

const FilterGrid = styled.div`
    display: grid;
    grid-template-columns: 84px 1fr;
    grid-auto-rows: 1fr;
    flex: none;
    height: 95px;
    margin: 4px 0 3px 4px;
`

const Info = styled.dl`
    display: flex;
    flex: none;
    height: 22px;
    margin: 0 0 0 -7px;
    padding-top: 1px;
    color: #737176;
    font-size: 10px;
    line-height: 11px;
`

const InfoItem = styled.div`
    width: ${({ $width }) => $width}px;
    white-space: nowrap;
    dd {
        margin: 0;
    }
`

const StatusBar = styled.footer`
    display: flex;
    flex: none;
    height: 19px;
    padding-top: 4px;
    border-top: 2px solid #1c1c1c;
    color: #68666b;
    font-size: 10px;
    line-height: 13px;
    white-space: nowrap;
`

const StatusCell = styled.span`
    ${({ $grow, $width }) => ($grow ? 'flex: 1; min-width: 0;' : `width: ${$width}px;`)}
`

// floating window on top of the editor
const Window = styled.section`
    position: absolute;
    inset: 152px 267px 147px 253px;
    display: flex;
    flex-direction: column;
    overflow: hidden;
    border: 1px solid #5c5a60;
    border-radius: 9px;
    background: #2c2c2c;
    box-shadow: 0 12px 32px rgba(0, 0, 0, .6);
`

const WindowTitle = styled.header`
    ${bar}
    ${wide}
    justify-content: space-between;
    height: 22px;
    padding: 0 6px;
    background: #322f39;
    border-bottom: 1px solid #1d1c20;
    font-weight: 600;
    color: #aeabb6;
`

const ViewerToolbar = styled.div`
    ${bar}
    height: 29px;
    padding-left: 2px;
`

const ViewerBody = styled.div`
    display: flex;
    flex: 1;
    min-height: 0;
`

const Scene = styled.div`
    display: flex;
    flex-direction: column;
    flex: 1;
    min-width: 0;
`

const Notice = styled.div`
    ${bar}
    ${wide}
    gap: 5px;
    height: 26px;
    padding: 0 7px 0 4px;
    background: #1a1a14;
`

const CloseNotice = styled.button`
    margin-left: auto;
`

const Viewport = styled.div`
    flex: 1;
    min-height: 0;
    background: linear-gradient(#cdcce8, #64637f);
    border-right: 1px solid #85848f;
`

const BoardSvg = styled.svg`
    display: block;
    width: 100%;
    height: 100%;
`

const ViewerSide = styled.aside`
    display: flex;
    flex-direction: column;
    width: 160px;
    flex: none;
    margin-left: 6px;
`

const ScrollArea = styled.div`
    display: flex;
    flex: 1;
    min-height: 0;
    margin: 4px 3px 0 0;
`

const ListClip = styled.div`
    display: grid;
    align-content: start;
    gap: 9px;
    flex: 1;
    min-width: 0;
    margin-left: -6px;
    padding-top: 3px;
    overflow: hidden;
`

const Track = styled.div`
    width: 13px;
    padding: 2px 3px;
    background: #353535;
`

const Thumb = styled.div`
    height: 76%;
    border-radius: 4px;
    background: #8f8d92;
`

const ViewerOptions = styled.div`
    display: grid;
    gap: 5px;
    margin: 0 3px;
    padding: 5px 2px 7px;
    border-bottom: 1px solid #444;
`

const ViewerPresets = styled.div`
    display: grid;
    gap: 6px;
    padding: 7px 4px 5px 5px;
`

const WindowStatus = styled.footer`
    flex: none;
    height: 23px;
    padding-left: 3px;
    border-top: 1px solid #1c1c1c;
    line-height: 23px;
    color: #b5b2ba;
`
